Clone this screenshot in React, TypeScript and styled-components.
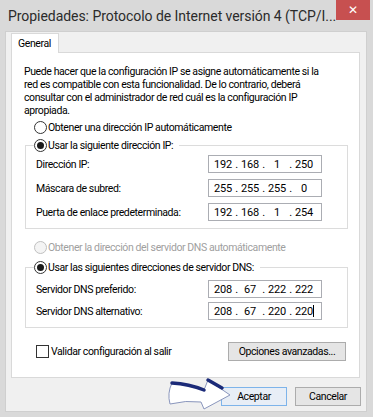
import React from "react";
import styled, { createGlobalStyle } from "styled-components";

const Global = createGlobalStyle`
  html, body { margin: 0; padding: 0; }
  body { background: #d9d9d9; font-family: Roboto, "Noto Sans", sans-serif; }
`;

const Window = styled.div`
  position: relative;
  width: 373px;
  height: 417px;
  background: #d9d9d9;
  display: flex;
  flex-direction: column;
  overflow: hidden;
  font-family: Roboto, "Noto Sans", sans-serif;
  font-size: 10.5px;
  letter-spacing: -0.4px;
`;

const TitleBar = styled.div`
  height: 31px;
  display: flex;
  align-items: flex-start;
  justify-content: space-between;
`;

const TitleText = styled.div`
  font-size: 14px;
  letter-spacing: -0.05px;
  color: #2b2b2b;
  padding: 8px 0 0 8px;
  white-space: nowrap;
  overflow: hidden;
  min-width: 0;
`;

const CloseBtn = styled.div`
  width: 34px;
  height: 20px;
  margin-right: 3px;
  flex-shrink: 0;
  background: #c75050;
  color: #fff;
  font-family: "DejaVu Sans", sans-serif;
  font-weight: bold;
  font-size: 12px;
  letter-spacing: 0;
  display: flex;
  align-items: center;
  justify-content: center;
`;

const Client = styled.div`
  margin: 0 6px 0 5px;
  height: 381px;
  background: #f0f0f0;
  border: 1px solid #cfcfcf;
  box-sizing: border-box;
  display: flex;
  flex-direction: column;
  padding: 0 5px 0 5px;
`;

const TabStrip = styled.div`
  display: flex;
  padding-top: 1px;
  height: 20px;
  position: relative;
  z-index: 1;
`;

const Tab = styled.div`
  width: 48px;
  height: 20px;
  box-sizing: border-box;
  background: #fff;
  border: 1px solid #d9d9d9;
  border-bottom: none;
  padding: 3px 0 0 6px;
  color: #000;
`;

const Panel = styled.div`
  width: 349px;
  height: 326px;
  box-sizing: border-box;
  margin-top: -1px;
  background: #fff;
  border: 1px solid #d9d9d9;
  padding: 12px 12px 0 12px;
  display: flex;
  flex-direction: column;
  color: #000;
`;

const Para = styled.p`
  margin: 0;
  line-height: 13px;
`;

const RadioRow = styled.label<{ $disabled?: boolean }>`
  display: flex;
  align-items: center;
  height: 14px;
  padding-left: 10px;
  gap: 1px;
  color: ${(p) => (p.$disabled ? "#a0a0a0" : "#000")};
  margin-top: ${(p) => (p.$disabled ? "11px" : "3px")};
`;

const RadioCircle = styled.span<{ $checked?: boolean; $disabled?: boolean }>`
  width: 13px;
  height: 13px;
  box-sizing: border-box;
  border-radius: 50%;
  border: 1px solid ${(p) => (p.$disabled ? "#c0c0c0" : "#333")};
  background: ${(p) => (p.$disabled ? "#f4f4f4" : "#fff")};
  display: flex;
  align-items: center;
  justify-content: center;
  flex-shrink: 0;
  &::after {
    content: "";
    width: 7px;
    height: 7px;
    border-radius: 50%;
    background: ${(p) => (p.$checked ? "#1a1a1a" : "transparent")};
  }
`;

const Group = styled.fieldset<{ $top: number }>`
  margin: ${(p) => p.$top}px 0 0 1px;
  width: 323px;
  box-sizing: border-box;
  border: 1px solid #dcdcdc;
  padding: 0 0 7px 0;
`;

const Legend = styled.legend`
  margin-left: 8px;
  padding: 0 6px 0 0;
  background: #fff;
  height: 14px;
  display: flex;
  align-items: center;
  gap: 1px;
`;

const Rows = styled.div<{ $gap: number; $top: number }>`
  display: flex;
  flex-direction: column;
  gap: ${(p) => p.$gap}px;
  padding: ${(p) => p.$top}px 0 0 10px;
`;

const Row = styled.div`
  display: flex;
  align-items: center;
  height: 18px;
`;

const RowLabel = styled.span`
  width: 172px;
  white-space: nowrap;
`;

const IpBox = styled.div`
  width: 114px;
  height: 18px;
  box-sizing: border-box;
  border: 1px solid #abadb3;
  background: #fff;
  display: flex;
  align-items: center;
  padding-left: 3px;
  position: relative;
  letter-spacing: -0.2px;
  font-size: 11px;
`;

const Octet = styled.span`
  width: 22px;
  text-align: center;
`;

const Dot = styled.span`
  width: 5px;
  text-align: center;
`;

const Caret = styled.span`
  position: absolute;
  left: 104px;
  top: 2px;
  width: 1px;
  height: 12px;
  background: #000;
`;

const Footer = styled.div`
  display: flex;
  align-items: center;
  justify-content: space-between;
  margin-top: 14px;
  padding: 0 1px 0 12px;
`;

const CheckRow = styled.label`
  display: flex;
  align-items: center;
  gap: 2px;
  margin-top: -1px;
`;

const CheckBox = styled.span`
  width: 13px;
  height: 13px;
  box-sizing: border-box;
  border: 1px solid #333;
  background: #fff;
`;

const Button = styled.div<{ $w: number; $default?: boolean }>`
  width: ${(p) => p.$w}px;
  height: 19px;
  box-sizing: border-box;
  border: 1px solid ${(p) => (p.$default ? "#7eb4ea" : "#acacac")};
  background: ${(p) => (p.$default ? "#e8eef6" : "#e5e5e5")};
  display: flex;
  align-items: center;
  justify-content: center;
  color: #000;
  white-space: nowrap;
`;

const BottomBar = styled.div`
  display: flex;
  justify-content: flex-end;
  gap: 8px;
  margin-top: 9px;
`;

const ArrowSvg = styled.svg`
  position: absolute;
  left: 0;
  top: 0;
  pointer-events: none;
`;

const Ip = ({ v, caret }: { v: string[]; caret?: boolean }) => (
  <IpBox>
    {v.map((o, i) => (
      <React.Fragment key={i}>
        <Octet>{o}</Octet>
        {i < 3 && <Dot>.</Dot>}
      </React.Fragment>
    ))}
    {caret && <Caret />}
  </IpBox>
);

export default function App() {
  return (
    <>
      <Global />
      <Window>
        <TitleBar>
          <TitleText>Propiedades: Protocolo de Internet versión 4 (TCP/I...</TitleText>
          <CloseBtn>✕</CloseBtn>
        </TitleBar>
        <Client>
          <TabStrip>
            <Tab>General</Tab>
          </TabStrip>
          <Panel>
            <Para>
              Puede hacer que la configuración IP se asigne automáticamente si la
              <br />
              red es compatible con esta funcionalidad. De lo contrario, deberá
              <br />
              consultar con el administrador de red cuál es la configuración IP
              <br />
              apropiada.
            </Para>
            <RadioRow>
              <RadioCircle />
              Obtener una dirección IP automáticamente
            </RadioRow>
            <Group $top={4}>
              <Legend>
                <RadioCircle $checked />
                Usar la siguiente dirección IP:
              </Legend>
              <Rows $gap={6} $top={3}>
                <Row>
                  <RowLabel>Dirección IP:</RowLabel>
                  <Ip v={["192", "168", "1", "250"]} />
                </Row>
                <Row>
                  <RowLabel>Máscara de subred:</RowLabel>
                  <Ip v={["255", "255", "255", "0"]} />
                </Row>
                <Row>
                  <RowLabel>Puerta de enlace predeterminada:</RowLabel>
                  <Ip v={["192", "168", "1", "254"]} />
                </Row>
              </Rows>
            </Group>
            <RadioRow $disabled>
              <RadioCircle $disabled />
              Obtener la dirección del servidor DNS automáticamente
            </RadioRow>
            <Group $top={6}>
              <Legend>
                <RadioCircle $checked />
                Usar las siguientes direcciones de servidor DNS:
              </Legend>
              <Rows $gap={4} $top={6}>
                <Row>
                  <RowLabel>Servidor DNS preferido:</RowLabel>
                  <Ip v={["208", "67", "222", "222"]} />
                </Row>
                <Row>
                  <RowLabel>Servidor DNS alternativo:</RowLabel>
                  <Ip v={["208", "67", "220", "220"]} caret />
                </Row>
              </Rows>
            </Group>
            <Footer>
              <CheckRow>
                <CheckBox />
                Validar configuración al salir
              </CheckRow>
              <Button $w={118}>Opciones avanzadas...</Button>
            </Footer>
          </Panel>
          <BottomBar>
            <Button $w={66} $default>
              Aceptar
            </Button>
            <Button $w={66}>Cancelar</Button>
          </BottomBar>
        </Client>
        <ArrowSvg width="373" height="417" viewBox="0 0 373 417">
          <path
            d="M172,383 Q188,385 204,390 L208,380 L230,395 L204,409 L201,402 Q186,400 170,404 Q167,393 172,383 Z"
            fill="#ffffff"
            stroke="#8a96bd"
            strokeWidth="1"
          />
          <path d="M172,383 Q189,384 204,390" fill="none" stroke="#1b2a78" strokeWidth="3.5" strokeLinecap="round" />
          <path d="M208,380 L222,388" fill="none" stroke="#1b2a78" strokeWidth="3.5" strokeLinecap="round" />
        </ArrowSvg>
      </Window>
    </>
  );
}
